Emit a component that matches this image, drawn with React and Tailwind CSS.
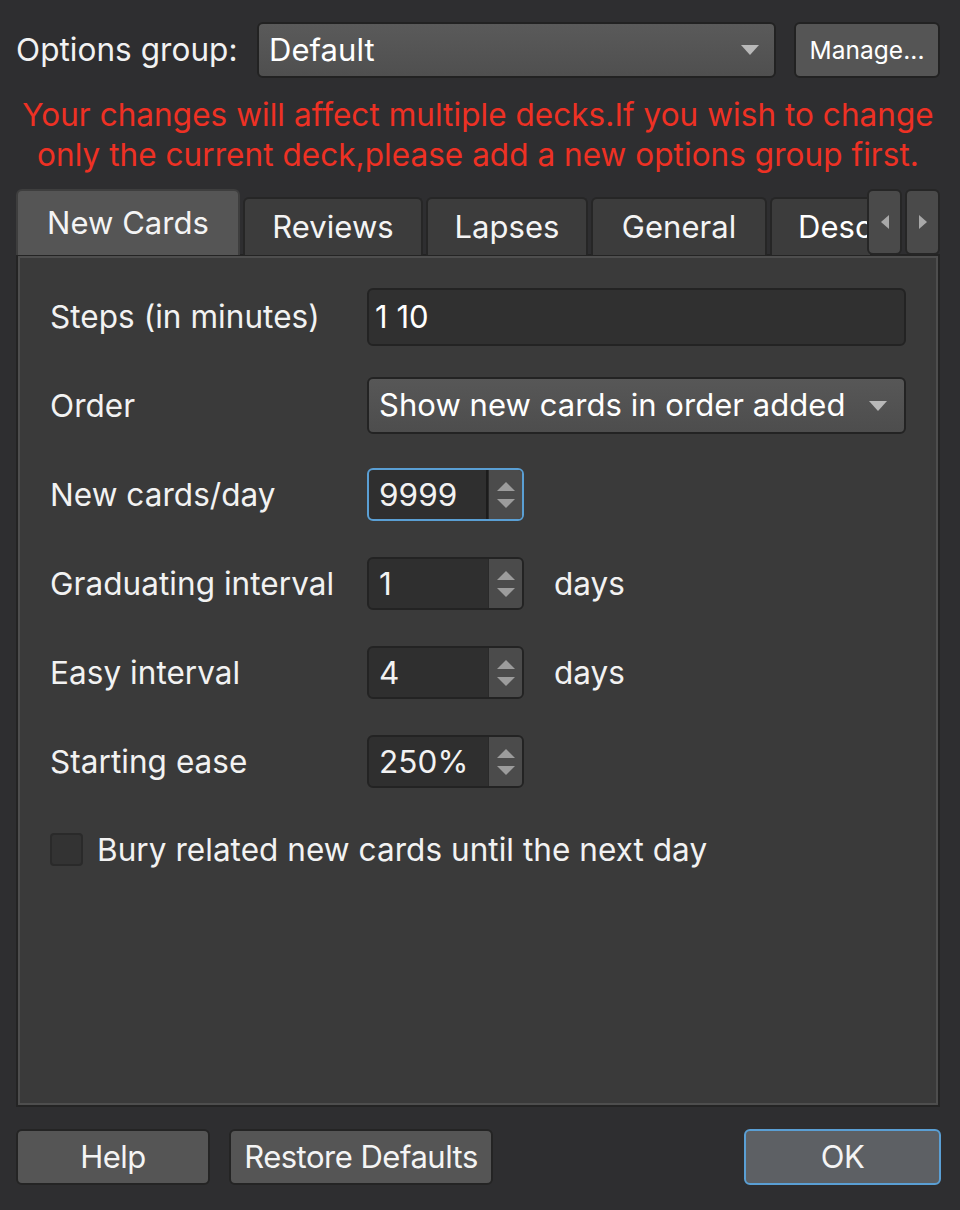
// App.jsx — deck options dialog (dark theme)

const FONT = { fontFamily: 'Inter, "Noto Sans", sans-serif', letterSpacing: '0.05px' }

function Caret({ className = '' }) {
  return (
    <svg width="20" height="12" viewBox="0 0 20 12" className={className}>
      <path d="M1 1 L19 1 L10 11 Z" fill="#b8b8b8" />
    </svg>
  )
}

function SpinBox({ value, focused, suffix }) {
  return (
    <div className="flex items-center gap-[30px]">
      <div className={`flex h-[53px] w-[157px] rounded-md border-2 ${focused ? 'border-[#5a9fd4]' : 'border-[#232323]'} bg-[#2f2f2f] overflow-hidden`}>
        <div className={`flex-1 flex items-center pl-[10px] text-[31.5px] text-[#f2f2f2] ${focused ? 'border-r-2 border-[#1c1c1c]' : ''}`}>{value}</div>
        <div className="w-[34px] bg-[#4b4b4b] flex flex-col items-center justify-center gap-[6px] border-l border-[#2a2a2a]">
          <svg width="20" height="11" viewBox="0 0 20 11"><path d="M1 10 L19 10 L10 1 Z" fill="#9c9c9c" /></svg>
          <svg width="20" height="11" viewBox="0 0 20 11"><path d="M1 1 L19 1 L10 10 Z" fill="#9c9c9c" /></svg>
        </div>
      </div>
      {suffix && <span className="text-[31.5px] text-[#f2f2f2]">{suffix}</span>}
    </div>
  )
}

function Row({ label, children, className = '' }) {
  return (
    <div className={`flex items-center ${className}`}>
      <div className="w-[317px] shrink-0 text-[31.5px] text-[#f2f2f2] whitespace-nowrap">{label}</div>
      {children}
    </div>
  )
}

function Tab({ children, active, w }) {
  return (
    <div className={`${w} shrink-0 flex items-center justify-center rounded-t-md border-2 border-b-0 text-[31px] text-[#f4f4f4] ${active ? 'h-[66px] bg-[#555555] border-[#3e3e3e]' : 'h-[58px] bg-[#3c3c3c] border-[#262626]'} overflow-hidden whitespace-nowrap`}>
      {children}
    </div>
  )
}

function Btn({ children, w, primary }) {
  return (
    <div className={`${w} h-[56px] flex items-center justify-center rounded-md border-2 ${primary ? 'border-[#5a9fd4] bg-[#5d6064]' : 'border-[#242424] bg-[#555555]'} text-[31px] tracking-[-0.5px] text-[#f4f4f4] whitespace-nowrap`}>
      {children}
    </div>
  )
}

export default function App() {
  return (
    <div className="w-[960px] h-[1210px] bg-[#2e2e30] text-white flex flex-col pl-4 pr-5 pt-[22px]" style={FONT}>

      {/* Options group */}
      <div className="flex items-center h-[56px]">
        <span className="text-[31.5px] text-[#f2f2f2] w-[241px] shrink-0 whitespace-nowrap">Options group:</span>
        <div className="w-[519px] h-[56px] flex items-center justify-between rounded-md border-2 border-[#222] bg-gradient-to-b from-[#5a5a5a] to-[#4f4f4f] pl-[10px] pr-[14px] text-[31px]">
          <span>Default</span>
          <Caret />
        </div>
        <div className="ml-[18px] w-[146px] h-[56px] flex items-center justify-center rounded-md border-2 border-[#222] bg-[#555555] text-[24.5px]">
          Manage...
        </div>
      </div>

      {/* Warning */}
      <div className="mt-[17px] text-center text-[31.5px] leading-[40px] text-[#ee3124] whitespace-nowrap">
        <div>Your changes will affect multiple decks.If you wish to change</div>
        <div>only the current deck,please add a new options group first.</div>
      </div>

      {/* Tabs */}
      <div className="mt-[14px] flex items-end gap-[3px] relative">
        <Tab active w="w-[224px]">New Cards</Tab>
        <Tab w="w-[180px]">Reviews</Tab>
        <Tab w="w-[162px]">Lapses</Tab>
        <Tab w="w-[176px]">General</Tab>
        <div className="w-[100px] h-[58px] shrink-0 rounded-tl-md border-2 border-b-0 border-r-0 border-[#262626] bg-[#3c3c3c] text-[31px] pl-[26px] flex items-center overflow-hidden whitespace-nowrap">
          Desc
        </div>
        <div className="absolute right-0 top-0 flex gap-[3px]">
          <div className="w-[35px] h-[66px] rounded-md border-2 border-[#262626] bg-[#4a4a4a] flex items-center justify-center">
            <svg width="10" height="16" viewBox="0 0 10 16"><path d="M9 1 L9 15 L1 8 Z" fill="#a8a8a8" /></svg>
          </div>
          <div className="w-[35px] h-[66px] rounded-md border-2 border-[#262626] bg-[#4a4a4a] flex items-center justify-center">
            <svg width="10" height="16" viewBox="0 0 10 16"><path d="M1 1 L1 15 L9 8 Z" fill="#a8a8a8" /></svg>
          </div>
        </div>
      </div>

      {/* Panel */}
      <div className="h-[853px] border-2 border-[#242424] -mt-[1px]">
        <div className="h-full border-2 border-[#4e4e4e] bg-[#3a3a3a] px-[30px] pt-[30px] flex flex-col">
          <Row label="Steps (in minutes)">
            <div className="w-[541px] h-[58px] rounded-md border-2 border-[#232323] bg-[#303030] flex items-center pl-[6px] text-[31px]">1 10</div>
          </Row>
          <Row label="Order" className="mt-[31px]">
            <div className="w-[541px] h-[57px] rounded-md border-2 border-[#232323] bg-gradient-to-b from-[#575757] to-[#4d4d4d] flex items-center justify-between pl-[10px] pr-[16px] text-[31px] whitespace-nowrap">
              <span>Show new cards in order added</span>
              <Caret />
            </div>
          </Row>
          <Row label="New cards/day" className="mt-[34px]">
            <SpinBox value="9999" focused />
          </Row>
          <Row label="Graduating interval" className="mt-[36px]">
            <SpinBox value="1" suffix="days" />
          </Row>
          <Row label="Easy interval" className="mt-[36px]">
            <SpinBox value="4" suffix="days" />
          </Row>
          <Row label="Starting ease" className="mt-[36px]">
            <SpinBox value="250%" />
          </Row>
          <div className="mt-[38px] flex items-center gap-[14px]">
            <div className="w-[33px] h-[33px] rounded-[4px] border-2 border-[#2a2a2a] bg-[#333333]" />
            <span className="text-[31.5px] text-[#f2f2f2] whitespace-nowrap">Bury related new cards until the next day</span>
          </div>
        </div>
      </div>

      {/* Footer buttons */}
      <div className="mt-[22px] flex items-center">
        <Btn w="w-[194px]">Help</Btn>
        <div className="ml-[19px]"><Btn w="w-[264px]">Restore Defaults</Btn></div>
        <div className="ml-auto -mr-[1px]"><Btn w="w-[197px]" primary>OK</Btn></div>
      </div>
    </div>
  )
}
